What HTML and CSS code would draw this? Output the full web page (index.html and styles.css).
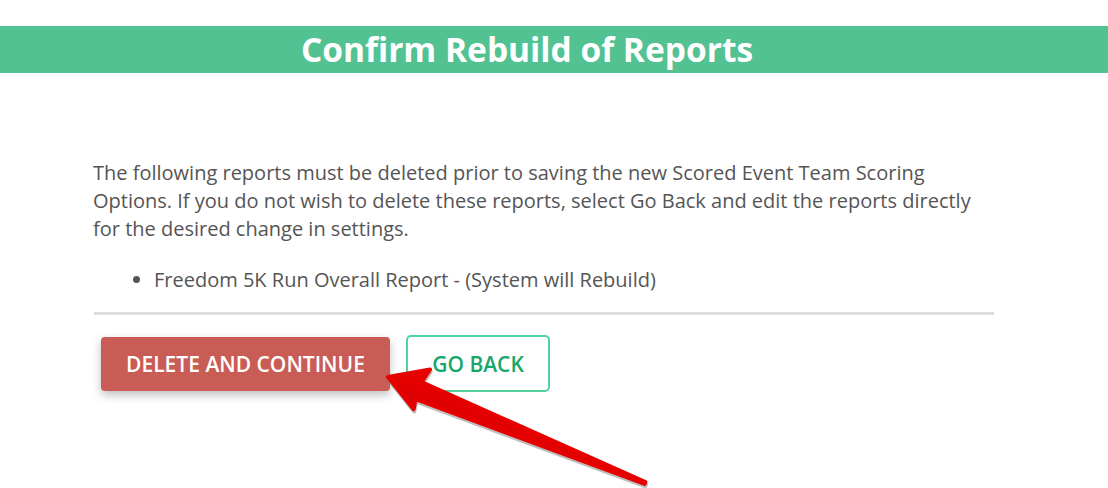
FILE: index.html
```html
<!DOCTYPE html>
<html>
<head>
<meta charset="utf-8">
<link rel="stylesheet" href="styles.css">
</head>
<body>
<header class="banner"><h1 class="banner-title">Confirm Rebuild of Reports</h1></header>
<main class="content">
  <p class="message">The following reports must be deleted prior to saving the new Scored Event Team Scoring Options. If you do not wish to delete these reports, select Go Back and edit the reports directly for the desired change in settings.</p>
  <ul class="report-list">
    <li>Freedom 5K Run Overall Report - (System will Rebuild)</li>
  </ul>
  <hr class="divider">
  <div class="actions">
    <button class="btn btn-delete">DELETE AND CONTINUE</button>
    <button class="btn btn-back">GO BACK</button>
  </div>
</main>
<svg class="arrow" width="1108" height="488" viewBox="0 0 1108 488">
  <defs>
    <linearGradient id="ag" x1="0" y1="0" x2="0" y2="1">
      <stop offset="0" stop-color="#f20000"/>
      <stop offset="1" stop-color="#d40000"/>
    </linearGradient>
  </defs>
  <g transform="translate(388 377) rotate(22.4)">
    <polygon transform="translate(1.5 2)" points="0,0 36,-23 33,-8 278,-1 278,1 34,10 36,20" fill="#8a8a8a" stroke="#8a8a8a" stroke-width="4" stroke-linejoin="round" opacity="0.55"/>
    <polygon points="0,0 36,-23 33,-8 278,-1 278,1 34,10 36,20" fill="url(#ag)" stroke="#e60000" stroke-width="4" stroke-linejoin="round"/>
  </g>
</svg>
</body>
</html>
```
FILE: styles.css
```css
html, body {
  margin: 0;
  padding: 0;
  background: #fff;
}
body {
  font-family: "Open Sans", "Noto Sans", sans-serif;
  color: #555;
  width: 1108px;
  height: 488px;
  overflow: hidden;
  position: relative;
}
.banner {
  margin-top: 26px;
  height: 47px;
  background: #52c293;
  display: flex;
  align-items: center;
  justify-content: center;
  padding-right: 54px;
}
.banner-title {
  margin: 0;
  color: #fff;
  font-size: 33.5px;
  font-weight: 700;
  line-height: 47px;
}
.content {
  padding-left: 93px;
  width: 901px;
  padding-top: 86px;
}
.message {
  margin: 0;
  width: 895px;
  font-size: 20px;
  line-height: 28px;
}
.report-list {
  margin: 23px 0 0;
  padding-left: 61px;
  font-size: 20px;
  line-height: 28px;
}
.divider {
  border: 0;
  height: 3px;
  background: #dedede;
  margin: 18px 0 0 1px;
}
.actions {
  display: flex;
  align-items: center;
  gap: 16px;
  margin-top: 20px;
  padding-left: 8px;
}
.btn {
  font-family: "Open Sans", "Noto Sans", sans-serif;
  font-weight: 600;
  font-size: 21px;
  border-radius: 4px;
  cursor: pointer;
}
.btn-delete {
  width: 289px;
  height: 54px;
  background: #c95d55;
  color: #fff;
  border: 0;
  box-shadow: 0 4px 10px rgba(0,0,0,0.25);
}
.btn-back {
  width: 144px;
  height: 57px;
  background: #fff;
  color: #17a76a;
  border: 2px solid #50d39c;
  border-radius: 5px;
}
.arrow {
  position: absolute;
  left: 0;
  top: 0;
  pointer-events: none;
}
```
